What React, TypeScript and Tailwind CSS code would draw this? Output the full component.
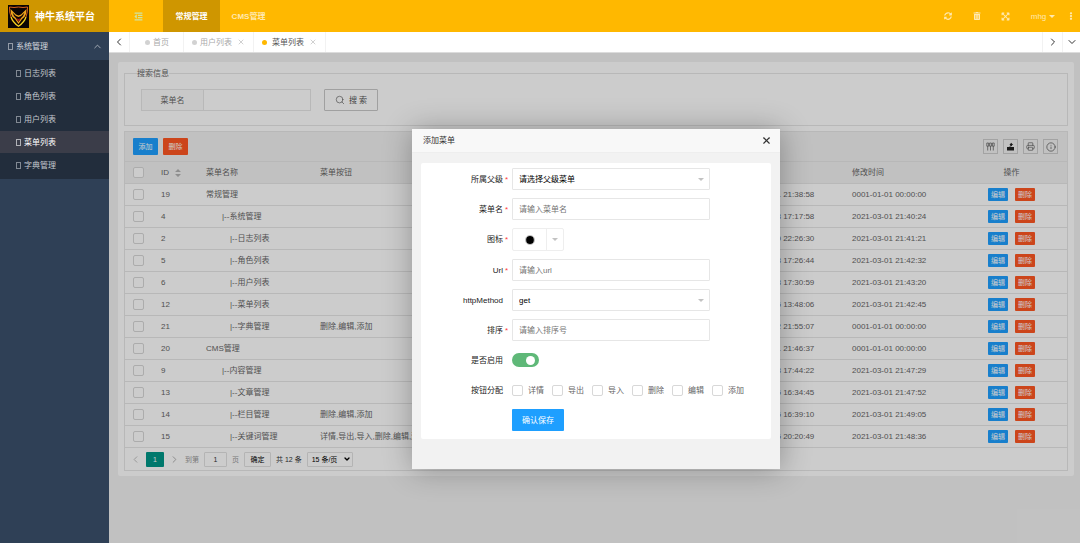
import { useState } from "react";
import type { ReactNode } from "react";
import { FaEllipsisV, FaExpandArrowsAlt, FaOutdent, FaSyncAlt, FaTrashAlt } from "react-icons/fa";
import { ChevronDown, ChevronLeft, ChevronRight, ChevronUp, Info, Printer, Search, X } from "lucide-react";

type MenuRow = {
  id: number;
  name: string;
  level: number;
  buttons: string;
  createdAt: string;
  updatedAt: string;
};

const rows: MenuRow[] = [
  { id: 19, name: "常规管理", level: 0, buttons: "", createdAt: "2021-02-21 21:38:58", updatedAt: "0001-01-01 00:00:00" },
  { id: 4, name: "系统管理", level: 1, buttons: "", createdAt: "2021-01-13 17:17:58", updatedAt: "2021-03-01 21:40:24" },
  { id: 2, name: "日志列表", level: 2, buttons: "", createdAt: "2021-01-10 22:26:30", updatedAt: "2021-03-01 21:41:21" },
  { id: 5, name: "角色列表", level: 2, buttons: "", createdAt: "2021-01-13 17:26:44", updatedAt: "2021-03-01 21:42:32" },
  { id: 6, name: "用户列表", level: 2, buttons: "", createdAt: "2021-01-13 17:30:59", updatedAt: "2021-03-01 21:43:20" },
  { id: 12, name: "菜单列表", level: 2, buttons: "", createdAt: "2021-01-15 13:48:06", updatedAt: "2021-03-01 21:42:45" },
  { id: 21, name: "字典管理", level: 2, buttons: "删除,编辑,添加", createdAt: "2021-03-02 21:55:07", updatedAt: "0001-01-01 00:00:00" },
  { id: 20, name: "CMS管理", level: 0, buttons: "", createdAt: "2021-03-01 21:46:37", updatedAt: "0001-01-01 00:00:00" },
  { id: 9, name: "内容管理", level: 1, buttons: "", createdAt: "2021-01-13 17:44:22", updatedAt: "2021-03-01 21:47:29" },
  { id: 13, name: "文章管理", level: 2, buttons: "", createdAt: "2021-01-15 16:34:45", updatedAt: "2021-03-01 21:47:52" },
  { id: 14, name: "栏目管理", level: 2, buttons: "删除,编辑,添加", createdAt: "2021-01-15 16:39:10", updatedAt: "2021-03-01 21:49:05" },
  { id: 15, name: "关键词管理", level: 2, buttons: "详情,导出,导入,删除,编辑,添加", createdAt: "2021-01-15 20:20:49", updatedAt: "2021-03-01 21:48:36" },
];

const sideItems = ["日志列表", "角色列表", "用户列表", "菜单列表", "字典管理"];
const permissions = ["详情", "导出", "导入", "删除", "编辑", "添加"];
const indents = ["", "pl-4", "pl-6"];

const checkboxClass =
  "block size-[11px] shrink-0 appearance-none rounded-[2px] border border-[#d8d8d8] bg-white checked:border-[#5fb878] checked:bg-[#5fb878]";
const inputClass =
  "h-[22px] w-[198px] rounded-[1px] border border-[#e6e6e6] bg-white px-1.5 text-black outline-none placeholder:text-[#757575]";

function Logo() {
  return (
    <svg viewBox="0 0 21 23" className="h-[23px] w-[21px] shrink-0" aria-hidden="true">
      <rect width="21" height="23" fill="#0b0504" />
      <path d="M3 12 Q1.2 7 1.5 2 Q6 3 10.5 2 Q15 3 19.5 2 Q19.8 7 18 12" fill="none" stroke="#d8601c" strokeWidth="1" />
      <path d="M3 12 Q4.5 17 10.5 21.3 Q16.5 17 18 12" fill="none" stroke="#f6d21f" strokeWidth="1.3" />
      <path d="M2.5 4 L8 9.5 L10.5 10.5 L13 9.5 L18.5 4 Q18.5 9 16.5 12 L14 14 L10.5 19 L7 14 L4.5 12 Q2.5 9 2.5 4Z" fill="#f0a51d" />
      <path d="M4.5 7.5 L8 11 L10.5 12 L13 11 L16.5 7.5 Q15.5 11 13.5 12.5 L10.5 17 L7.5 12.5 Q5.5 11 4.5 7.5Z" fill="#120604" />
      <path d="M8 13 L10.5 14 L13 13 L10.5 16.5Z" fill="#a3161a" />
    </svg>
  );
}

function Glyph() {
  return <span className="h-[7px] w-[5px] shrink-0 border border-current opacity-60" />;
}

function Caret({ className }: { className: string }) {
  return (
    <svg viewBox="0 0 8 4" className={className} fill="currentColor" aria-hidden="true">
      <path d="M0 0h8L4 4z" />
    </svg>
  );
}

function Header() {
  return (
    <header className="flex h-8 shrink-0 bg-[#ffb800] text-[#ffe9b0]">
      <div className="flex w-[109px] shrink-0 items-center gap-1.5 bg-[#cf9600] pl-2 text-[10px] font-bold text-white">
        <Logo />
        <h1>神牛系统平台</h1>
      </div>
      <button type="button" aria-label="收起菜单" className="flex w-[54px] items-center justify-center pl-1 text-[#cfe3a4]">
        <FaOutdent className="size-[9px]" />
      </button>
      <nav className="flex font-bold">
        <a href="#general" className="flex w-[57px] items-center justify-center bg-[#cf9600] text-white">
          常规管理
        </a>
        <a href="#cms" className="flex w-[57px] items-center justify-center">
          CMS管理
        </a>
      </nav>
      <div className="ml-auto flex items-center">
        <button type="button" aria-label="刷新" className="flex w-[29px] justify-center">
          <FaSyncAlt className="size-2" />
        </button>
        <button type="button" aria-label="清理" className="flex w-[29px] justify-center">
          <FaTrashAlt className="size-2" />
        </button>
        <button type="button" aria-label="全屏" className="flex w-[29px] justify-center">
          <FaExpandArrowsAlt className="size-[9px]" />
        </button>
        <button type="button" className="flex w-[42px] items-center justify-center gap-[3px] pl-1">
          mhg
          <Caret className="h-[3px] w-1.5" />
        </button>
        <button type="button" aria-label="更多" className="flex w-[18px] justify-center">
          <FaEllipsisV className="size-2" />
        </button>
      </div>
    </header>
  );
}

function Sidebar() {
  return (
    <aside className="w-[109px] shrink-0 bg-[#2f4056] text-[#c3c7cd]">
      <button type="button" className="flex h-7 w-full items-center gap-[3px] pr-1.5 pl-2 text-[#d5d9de]">
        <Glyph />
        系统管理
        <ChevronUp className="ml-auto size-[11px]" strokeWidth={1.5} />
      </button>
      <nav className="flex flex-col gap-px bg-[#222d3c] pt-0.5 pb-[3px]">
        {sideItems.map((item) => (
          <a
            key={item}
            href={`#${item}`}
            className={
              item === "菜单列表"
                ? "flex h-[22px] items-center gap-[3px] bg-[#3b3d49] pl-4 text-white"
                : "flex h-[22px] items-center gap-[3px] pl-4"
            }
          >
            <Glyph />
            {item}
          </a>
        ))}
      </nav>
    </aside>
  );
}

function TabBar() {
  return (
    <div className="flex h-[21px] shrink-0 border-b border-[#dcdcdc] bg-white text-[#aaaaaa]">
      <button type="button" aria-label="向左" className="flex w-[21px] items-center justify-center border-r border-[#f2f2f2] text-[#333333]">
        <ChevronLeft className="size-3" />
      </button>
      <div className="flex w-[54px] items-center gap-[3px] border-r border-[#f2f2f2] pl-[15px]">
        <span className="size-[5px] rounded-full bg-[#d2d2d2]" />
        首页
      </div>
      <div className="flex w-[70px] items-center gap-[3px] border-r border-[#f2f2f2] pl-2">
        <span className="size-[5px] rounded-full bg-[#d2d2d2]" />
        用户列表
        <button type="button" aria-label="关闭用户列表" className="ml-0.5">
          <X className="size-2 text-[#b8b8b8]" />
        </button>
      </div>
      <div className="flex w-[72px] items-center gap-[5px] border-r border-[#f2f2f2] pl-2 text-[#555555]">
        <span className="size-[5px] rounded-full bg-[#ffb800]" />
        菜单列表
        <button type="button" aria-label="关闭菜单列表">
          <X className="size-2 text-[#b8b8b8]" />
        </button>
      </div>
      <div className="ml-auto flex text-[#333333]">
        <button type="button" aria-label="向右" className="flex w-5 items-center justify-center border-l border-[#f2f2f2]">
          <ChevronRight className="size-3" />
        </button>
        <button type="button" aria-label="标签操作" className="flex w-[18px] items-center justify-center border-l border-[#f2f2f2]">
          <ChevronDown className="size-3" />
        </button>
      </div>
    </div>
  );
}

function SearchPanel() {
  return (
    <fieldset className="border border-[#e6e6e6] pt-[9px] pb-3.5 pl-4">
      <legend className="-ml-1">搜索信息</legend>
      <div className="flex">
        <label htmlFor="menu-search" className="flex h-[22px] w-[63px] items-center justify-center border border-[#e6e6e6] bg-[#fafafa]">
          菜单名
        </label>
        <input id="menu-search" type="text" className="h-[22px] w-[107px] border border-l-0 border-[#e6e6e6] bg-white px-1.5 outline-none" />
        <button type="button" className="ml-[13px] flex h-[22px] w-[54px] items-center justify-center gap-1 rounded-[1px] border border-[#c9c9c9] bg-white text-[#555555]">
          <Search className="size-2.5" strokeWidth={1.5} />
          搜 索
        </button>
      </div>
    </fieldset>
  );
}

function ToolButton({ label, children }: { label: string; children: ReactNode }) {
  return (
    <button type="button" aria-label={label} className="flex size-[15px] items-center justify-center border border-[#cccccc] text-[#555555]">
      {children}
    </button>
  );
}

function Toolbar() {
  return (
    <div className="flex h-[29px] items-center gap-[5px] bg-[#f2f2f2] pr-[9px] pl-2 text-[7px]">
      <button type="button" className="h-[17px] w-[25px] rounded-[1px] bg-[#1e9fff] text-white">添加</button>
      <button type="button" className="mr-auto h-[17px] w-[25px] rounded-[1px] bg-[#ff5722] text-white">删除</button>
      <ToolButton label="筛选列">
        <svg viewBox="0 0 9 9" className="size-[9px]" fill="none" stroke="currentColor" strokeWidth="0.7">
          <path d="M0.8 1h1.8v3.2H0.8zM3.6 1h1.8v3.2H3.6zM6.4 1h1.8v3.2H6.4zM1.7 4.2v4.3M4.5 4.2v4.3M7.3 4.2v4.3" />
        </svg>
      </ToolButton>
      <ToolButton label="导出">
        <svg viewBox="0 0 9 9" className="size-[9px]" fill="#222222">
          <path d="M1 5h7v3.5H1zM5.2 0.8 7.2 3H6.2C6 4 5 4.6 2.6 4.6 4 4 4.4 3.6 4.5 3H3.4z" />
        </svg>
      </ToolButton>
      <ToolButton label="打印">
        <Printer className="size-[9px]" strokeWidth={1.75} />
      </ToolButton>
      <ToolButton label="提示">
        <Info className="size-2.5" strokeWidth={1.75} />
      </ToolButton>
    </div>
  );
}

function MenuTable() {
  return (
    <table className="w-full table-fixed border-y border-[#e6e6e6] text-left">
      <colgroup>
        <col className="w-[28px]" />
        <col className="w-[45px]" />
        <col className="w-[114px]" />
        <col className="w-[112px]" />
        <col />
        <col className="w-[112px]" />
        <col className="w-[112px]" />
        <col className="w-[111px]" />
      </colgroup>
      <thead>
        <tr className="h-[22px] border-b border-[#e6e6e6] bg-[#f2f2f2]">
          <th className="pl-2">
            <input type="checkbox" aria-label="全选" className={checkboxClass} />
          </th>
          <th className="px-2 font-normal">
            <span className="flex items-center gap-1.5">
              ID
              <svg viewBox="0 0 6 8" className="h-2 w-1.5" fill="#b2b2b2">
                <path d="M3 0l3 3H0zM3 8L0 5h6z" />
              </svg>
            </span>
          </th>
          <th className="px-2 font-normal">菜单名称</th>
          <th className="px-2 font-normal">菜单按钮</th>
          <th />
          <th className="px-2 font-normal">创建时间</th>
          <th className="px-2 font-normal">修改时间</th>
          <th className="px-2 text-center font-normal">操作</th>
        </tr>
      </thead>
      <tbody>
        {rows.map((row) => (
          <tr key={row.id} className="h-[22px] border-b border-[#e6e6e6] last:border-b-0">
            <td className="pl-2">
              <input type="checkbox" aria-label={`选择 ${row.id}`} className={checkboxClass} />
            </td>
            <td className="px-2">{row.id}</td>
            <td className="px-2">
              <span className={indents[row.level]}>
                {row.level > 0 && "|--"}
                {row.name}
              </span>
            </td>
            <td className="pl-2 whitespace-nowrap">{row.buttons}</td>
            <td />
            <td className="px-2 whitespace-nowrap">{row.createdAt}</td>
            <td className="px-2 whitespace-nowrap">{row.updatedAt}</td>
            <td>
              <div className="flex justify-center gap-[7px] text-[7px] text-white">
                <button type="button" className="h-[13px] w-5 rounded-[1px] bg-[#1e9fff]">编辑</button>
                <button type="button" className="h-[13px] w-5 rounded-[1px] bg-[#ff5722]">删除</button>
              </div>
            </td>
          </tr>
        ))}
      </tbody>
    </table>
  );
}

function Pagination() {
  return (
    <div className="flex h-[22px] items-center bg-white pl-[5px] text-[7px] text-[#333333]">
      <button type="button" aria-label="上一页" className="mr-[5px] text-[#bbbbbb]">
        <ChevronLeft className="size-[11px]" />
      </button>
      <button type="button" className="mr-[5px] h-[15px] w-[18px] rounded-[1px] bg-[#009688] text-white">1</button>
      <button type="button" aria-label="下一页" className="mr-[5px] text-[#aaaaaa]">
        <ChevronRight className="size-[11px]" />
      </button>
      <label className="flex items-center gap-[5px] text-[#999999]">
        到第
        <input type="text" defaultValue="1" className="h-[15px] w-[23px] rounded-[1px] border border-[#e2e2e2] bg-white text-center text-[#333333] outline-none" />
        页
      </label>
      <button type="button" className="mx-[5px] h-[15px] w-[27px] rounded-[1px] border border-[#e2e2e2] bg-white text-black">确定</button>
      <span>共 12 条</span>
      <div className="relative ml-[5px] flex items-center">
        <select aria-label="每页条数" className="h-[15px] w-[46px] appearance-none rounded-[1px] border border-[#e2e2e2] bg-white pl-1 text-black outline-none">
          <option>15 条/页</option>
          <option>30 条/页</option>
        </select>
        <ChevronDown className="pointer-events-none absolute right-0.5 size-2 text-black" strokeWidth={4} />
      </div>
    </div>
  );
}

type FieldProps = {
  label: string;
  htmlFor?: string;
  required?: boolean;
  children: ReactNode;
};

function Field({ label, htmlFor, required, children }: FieldProps) {
  return (
    <div className="flex min-h-[22px] items-center">
      <label htmlFor={htmlFor} className="w-[82px] shrink-0 text-right text-[#222222]">
        {label}
      </label>
      <span className="w-[9px] shrink-0 pl-0.5 text-[#ff3b3b]">{required && "*"}</span>
      {children}
    </div>
  );
}

function AddMenuDialog() {
  const [enabled, setEnabled] = useState(true);

  return (
    <section role="dialog" aria-label="添加菜单" className="flex h-[340px] w-[368px] flex-col bg-[#f2f2f2] shadow-[1px_1px_28px_rgba(0,0,0,0.3)]">
      <div className="flex h-6 items-center border-b border-[#eeeeee] bg-[#f8f8f8] pr-2 pl-[11px] text-[#333333]">
        <h2>添加菜单</h2>
        <button type="button" aria-label="关闭" className="ml-auto">
          <X className="size-[11px]" strokeWidth={2.5} />
        </button>
      </div>
      <form className="mx-[9px] mt-2.5 flex flex-col gap-2 rounded-[2px] bg-white pt-[5px] pb-2">
        <Field label="所属父级" htmlFor="parent" required>
          <div className="relative flex items-center">
            <select id="parent" className={`${inputClass} appearance-none`}>
              <option>请选择父级菜单</option>
            </select>
            <Caret className="pointer-events-none absolute right-1.5 h-[3px] w-1.5 text-[#c2c2c2]" />
          </div>
        </Field>
        <Field label="菜单名" htmlFor="name" required>
          <input id="name" type="text" placeholder="请输入菜单名" className={inputClass} />
        </Field>
        <Field label="图标" htmlFor="icon" required>
          <button id="icon" type="button" aria-label="选择图标" className="flex h-[23px] w-[52px] rounded-[2px] border border-[#eeeeee]">
            <span className="flex h-full w-[33px] items-center justify-center">
              <svg viewBox="0 0 10 10" className="size-2.5">
                <circle cx="5" cy="5" r="4.6" fill="none" stroke="#999999" strokeWidth="0.6" />
                <circle cx="5" cy="5" r="3.9" fill="#000000" />
              </svg>
            </span>
            <span className="flex h-full flex-1 items-center justify-center border-l border-[#eeeeee]">
              <Caret className="h-[3px] w-1.5 text-[#c2c2c2]" />
            </span>
          </button>
        </Field>
        <Field label="Url" htmlFor="url" required>
          <input id="url" type="text" placeholder="请输入url" className={inputClass} />
        </Field>
        <Field label="httpMethod" htmlFor="method">
          <div className="relative flex items-center">
            <select id="method" className={`${inputClass} appearance-none`}>
              <option>get</option>
              <option>post</option>
            </select>
            <Caret className="pointer-events-none absolute right-1.5 h-[3px] w-1.5 text-[#c2c2c2]" />
          </div>
        </Field>
        <Field label="排序" htmlFor="sort" required>
          <input id="sort" type="text" placeholder="请输入排序号" className={inputClass} />
        </Field>
        <Field label="是否启用" htmlFor="enabled">
          <span className="relative flex items-center">
            <input
              id="enabled"
              type="checkbox"
              role="switch"
              checked={enabled}
              onChange={(e) => setEnabled(e.target.checked)}
              className="peer h-3.5 w-[27px] appearance-none rounded-full bg-[#d2d2d2] checked:bg-[#5fb878]"
            />
            <span className="pointer-events-none absolute left-1 size-[9px] rounded-full bg-white peer-checked:left-3.5" />
          </span>
        </Field>
        <Field label="按钮分配">
          <div className="flex gap-2 text-[#666666]">
            {permissions.map((item) => (
              <label key={item} className="flex items-center gap-[5px]">
                <input type="checkbox" className={checkboxClass} />
                {item}
              </label>
            ))}
          </div>
        </Field>
        <button type="submit" className="ml-[91px] h-[22px] w-[52px] rounded-[1px] bg-[#1e9fff] text-white">
          确认保存
        </button>
      </form>
    </section>
  );
}

export default function App() {
  return (
    <div className="flex min-h-screen flex-col font-['Liberation_Sans','Noto_Sans_CJK_SC',sans-serif] text-[8px] leading-[13px] text-[#666666]">
      <Header />
      <div className="flex flex-1">
        <Sidebar />
        <div className="flex min-w-0 flex-1 flex-col">
          <TabBar />
          <main className="relative flex-1 bg-[#f2f2f2] px-[9px] pt-[9px]">
            <div className="mr-[-3px] rounded-[2px] bg-white px-1.5 pt-[5px] pb-[5px]">
              <SearchPanel />
              <div className="mt-[5px] border border-[#e6e6e6]">
                <Toolbar />
                <MenuTable />
                <Pagination />
              </div>
            </div>
            <div className="absolute inset-0 flex items-center justify-center overflow-hidden bg-black/20 pt-0.5 pl-[3px]">
              <AddMenuDialog />
            </div>
          </main>
        </div>
      </div>
    </div>
  );
}
